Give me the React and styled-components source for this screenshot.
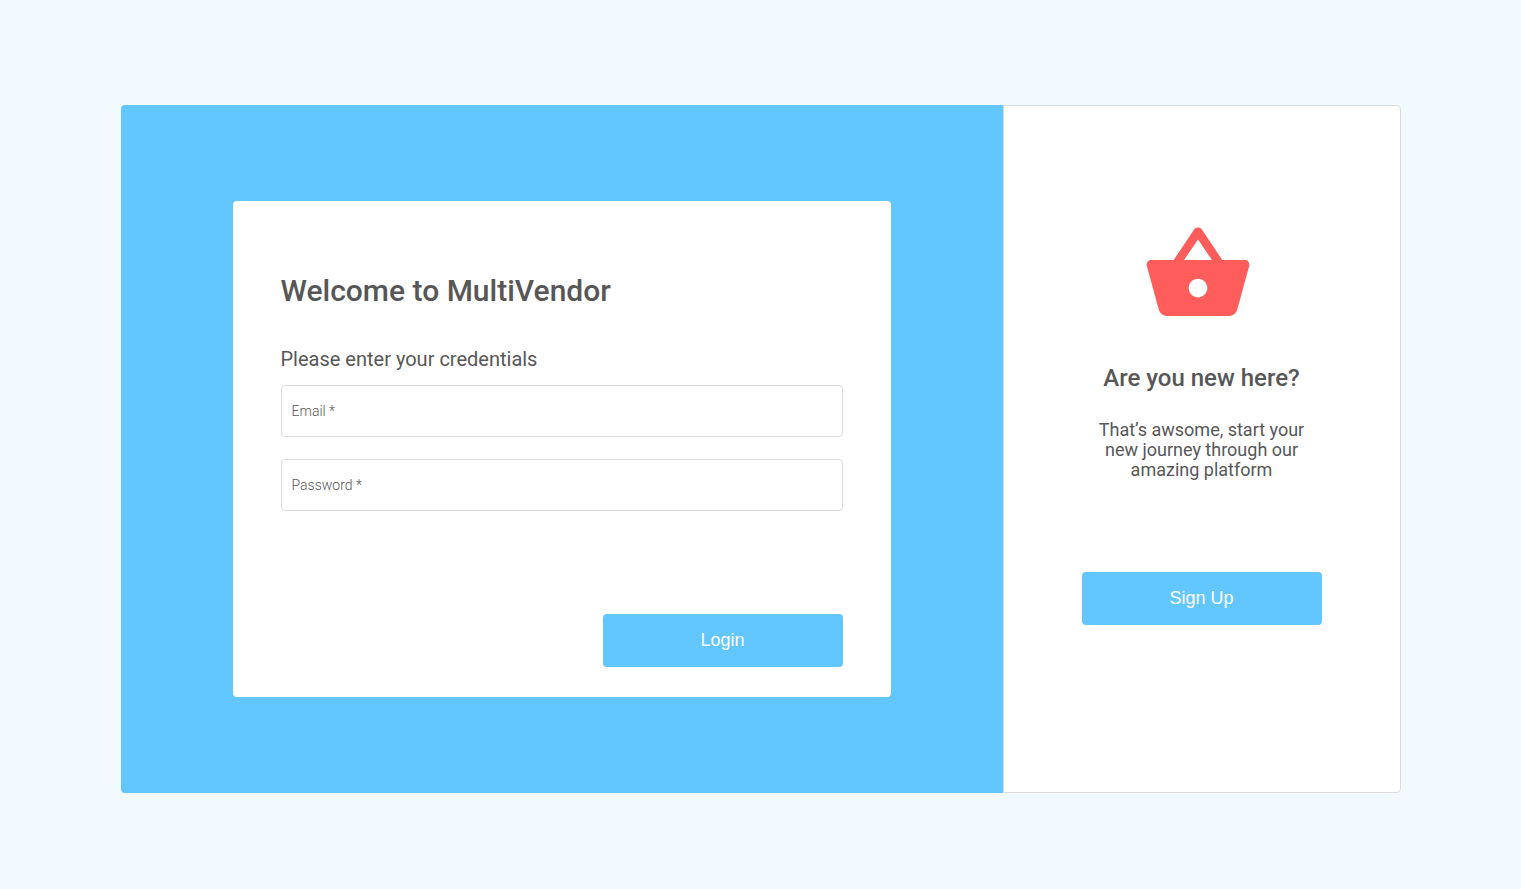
import React from "react";
import styled, { createGlobalStyle } from "styled-components";

const GlobalStyle = createGlobalStyle`
  *, *::before, *::after {
    box-sizing: border-box;
  }
  body {
    margin: 0;
    background: #f2f9ff;
    color: #575757;
    font-family: Roboto, sans-serif;
  }
`;

const Page = styled.main`
  min-height: 100vh;
  padding: 105px 24px 96px;
`;

const Shell = styled.div`
  display: grid;
  grid-template-columns: minmax(0, 882fr) minmax(0, 398fr);
  max-width: 1280px;
  min-height: 688px;
  margin: 0 auto;
`;

const LoginPanel = styled.section`
  padding: 96px 112px;
  background: #62c6ff;
  border-radius: 4px 0 0 4px;
`;

const Card = styled.form`
  display: flex;
  flex-direction: column;
  min-height: 496px;
  padding: 72px 48px 30px;
  background: #fff;
  border-radius: 4px;
`;

const Title = styled.h1`
  margin: 0 0 40px;
  font-size: 30px;
  font-weight: 500;
  line-height: 36px;
`;

const Lead = styled.p`
  margin: 0 0 15px;
  font-size: 20px;
  line-height: 21px;
`;

const Field = styled.div`
  display: flex;
  align-items: center;
  height: 52px;
  margin-bottom: 22px;
  padding: 0 10px;
  border: 1px solid #dcdcdc;
  border-radius: 4px;

  &:focus-within {
    border-color: #62c6ff;
  }
`;

const FieldLabel = styled.label`
  flex: none;
  font-size: 14px;
  font-weight: 300;
  line-height: 20px;
`;

const FieldInput = styled.input`
  flex: 1;
  min-width: 0;
  height: 100%;
  padding: 0 8px;
  border: 0;
  outline: 0;
  background: transparent;
  color: inherit;
  font: inherit;
  font-size: 14px;
`;

const Button = styled.button`
  width: 240px;
  max-width: 100%;
  height: 53px;
  padding: 0;
  border: 0;
  border-radius: 4px;
  background: #62c6ff;
  color: #fff;
  font-family: "Liberation Sans", Arial, sans-serif;
  font-size: 18px;
  cursor: pointer;
`;

const Actions = styled.div`
  display: flex;
  justify-content: flex-end;
  margin-top: auto;
`;

const SignUpPanel = styled.aside`
  display: flex;
  flex-direction: column;
  align-items: center;
  padding: 112px 24px;
  background: #fff;
  border: 1px solid #dcdcdc;
  border-radius: 0 4px 4px 0;
  text-align: center;
`;

const Basket = styled.svg`
  width: 112px;
  height: 112px;
  margin-right: 8px;
  fill: #ff5c5c;
`;

const Subtitle = styled.h2`
  margin: 34px 0 28px;
  font-size: 24px;
  font-weight: 500;
  line-height: 28px;
`;

const Pitch = styled.p`
  width: 240px;
  max-width: 100%;
  margin: 0 0 92px;
  padding: 0 12px;
  font-size: 18px;
  line-height: 20px;
`;

function TextField({ id, label, type }) {
  return (
    <Field>
      <FieldLabel htmlFor={id}>{label} *</FieldLabel>
      <FieldInput id={id} name={id} type={type} required />
    </Field>
  );
}

export default function App() {
  return (
    <>
      <GlobalStyle />
      <Page>
        <Shell>
          <LoginPanel>
            <Card onSubmit={(event) => event.preventDefault()}>
              <Title>Welcome to MultiVendor</Title>
              <Lead>Please enter your credentials</Lead>
              <TextField id="email" label="Email" type="email" />
              <TextField id="password" label="Password" type="password" />
              <Actions>
                <Button type="submit">Login</Button>
              </Actions>
            </Card>
          </LoginPanel>
          <SignUpPanel>
            <Basket viewBox="0 0 24 24" aria-hidden="true">
              <path d="M17.21 9l-4.38-6.56c-.19-.28-.51-.42-.83-.42-.32 0-.64.14-.83.43L6.79 9H2c-.55 0-1 .45-1 1 0 .09.01.18.04.27l2.54 9.27c.23.84 1 1.46 1.92 1.46h13c.92 0 1.69-.62 1.93-1.46l2.54-9.27L23 10c0-.55-.45-1-1-1h-4.79zM9 9l3-4.4L15 9H9zm3 8c-1.1 0-2-.9-2-2s.9-2 2-2 2 .9 2 2-.9 2-2 2z" />
            </Basket>
            <Subtitle>Are you new here?</Subtitle>
            <Pitch>That’s awsome, start your new journey through our amazing platform</Pitch>
            <Button type="button">Sign Up</Button>
          </SignUpPanel>
        </Shell>
      </Page>
    </>
  );
}
